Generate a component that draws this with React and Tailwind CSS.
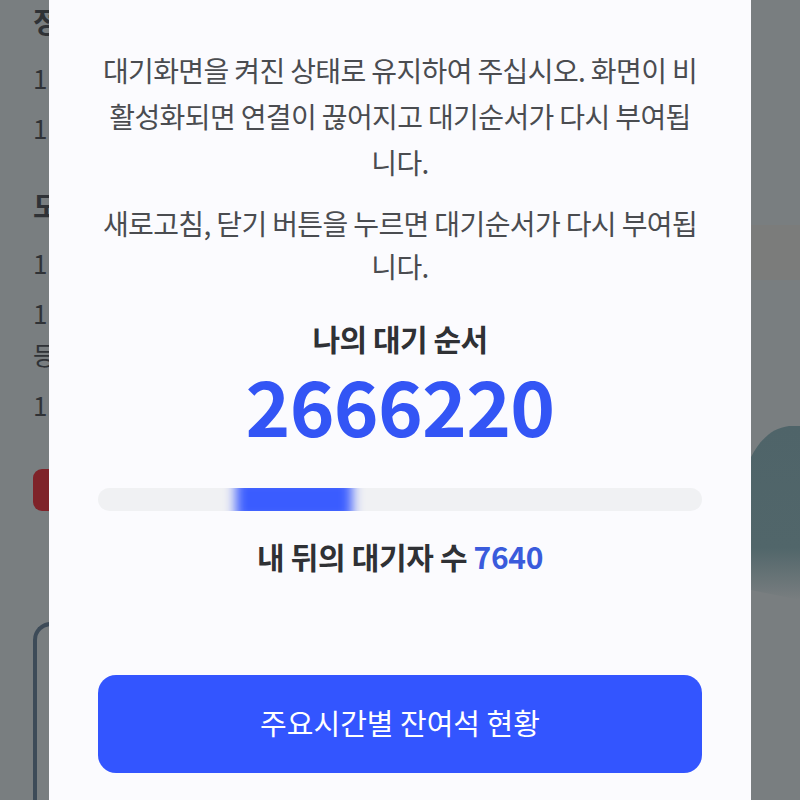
import React from "react";

const font = { fontFamily: '"Noto Sans CJK KR", "Noto Sans", sans-serif' };

const BackdropColumn = () => (
  <div className="w-[49px] pl-[33px] overflow-hidden shrink-0 flex flex-col text-[#2f3236]">
    <div className="h-[40px] shrink-0 text-[29px] leading-[40px] font-bold whitespace-nowrap">정</div>
    <div className="mt-[13px] h-[50px] shrink-0 text-[26px] leading-[50px] whitespace-nowrap">1</div>
    <div className="h-[50px] shrink-0 text-[26px] leading-[50px] whitespace-nowrap">1</div>
    <div className="mt-[27px] h-[50px] shrink-0 text-[29px] leading-[50px] font-bold whitespace-nowrap">도</div>
    <div className="mt-[8px] h-[50px] shrink-0 text-[26px] leading-[50px] whitespace-nowrap">1</div>
    <div className="h-[50px] shrink-0 text-[26px] leading-[50px] whitespace-nowrap">1</div>
    <div className="-mt-[5px] h-[42px] shrink-0 text-[25px] leading-[42px] whitespace-nowrap">등</div>
    <div className="mt-[5px] h-[50px] shrink-0 text-[26px] leading-[50px] whitespace-nowrap">1</div>
    <div className="mt-[39px] w-[40px] h-[42px] shrink-0 rounded-[9px] bg-[#7f2329]" />
    <div className="mt-[111px] w-[40px] h-[200px] shrink-0 rounded-tl-[18px] border-l-[4px] border-t-[4px] border-[#3d4b58]" />
  </div>
);

export default function App() {
  return (
    <div className="relative w-[800px] h-[800px] overflow-hidden bg-[#797e80] flex" style={font}>
      <BackdropColumn />

      {/* landscape bits behind the modal */}
      <svg className="absolute right-0 top-0" width="49" height="800" viewBox="0 0 49 800">
        <defs>
          <linearGradient id="fade" x1="0" y1="0" x2="0" y2="1">
            <stop offset="0" stopColor="#4f6469" />
            <stop offset="0.7" stopColor="#51666a" />
            <stop offset="1" stopColor="#797e80" />
          </linearGradient>
        </defs>
        <rect x="0" y="225" width="49" height="55" fill="#7b7c7b" />
        <path d="M0 457 C10 438 22 428 38 426 L49 426 L49 600 L0 590 Z" fill="url(#fade)" />
      </svg>

      <div className="absolute left-[49px] top-0 w-[702px] h-[800px] bg-[#fbfbfe] px-[49px] pt-[47px] flex flex-col">
        <div className="text-[28px] leading-[46px] tracking-[-0.62px] text-[#4a4c50] text-center">
          <p>대기화면을 켜진 상태로 유지하여 주십시오. 화면이 비활성화되면 연결이 끊어지고 대기순서가 다시 부여됩니다.</p>
          <p className="mt-[17px] leading-[43px]">새로고침, 닫기 버튼을 누르면 대기순서가 다시 부여됩니다.</p>
        </div>

        <div className="mt-[32px] text-center text-[30px] leading-[36px] font-bold tracking-[-0.5px] text-[#2f3135]">나의 대기 순서</div>
        <div className="mt-[12px] text-center text-[76px] leading-[72px] font-bold tracking-[-0.7px] text-[#3355f5]">2666220</div>

        <div className="relative mt-[48px] h-[23px] shrink-0 rounded-full bg-[#f0f1f3] overflow-hidden">
          <div className="absolute left-[138px] -top-[10px] h-[43px] w-[116px] bg-[#3a5cff] blur-[6px]" />
        </div>

        <div className="mt-[25px] text-center text-[30px] leading-[40px] font-bold tracking-[-0.35px] text-[#2f3135]">
          내 뒤의 대기자 수 <span className="text-[#3a5bdc]">7640</span>
        </div>

        <button className="mt-[99px] h-[98px] w-full shrink-0 rounded-[18px] bg-[#3355ff] pb-[3px] text-white text-[29px]">주요시간별 잔여석 현황</button>
      </div>
    </div>
  );
}
